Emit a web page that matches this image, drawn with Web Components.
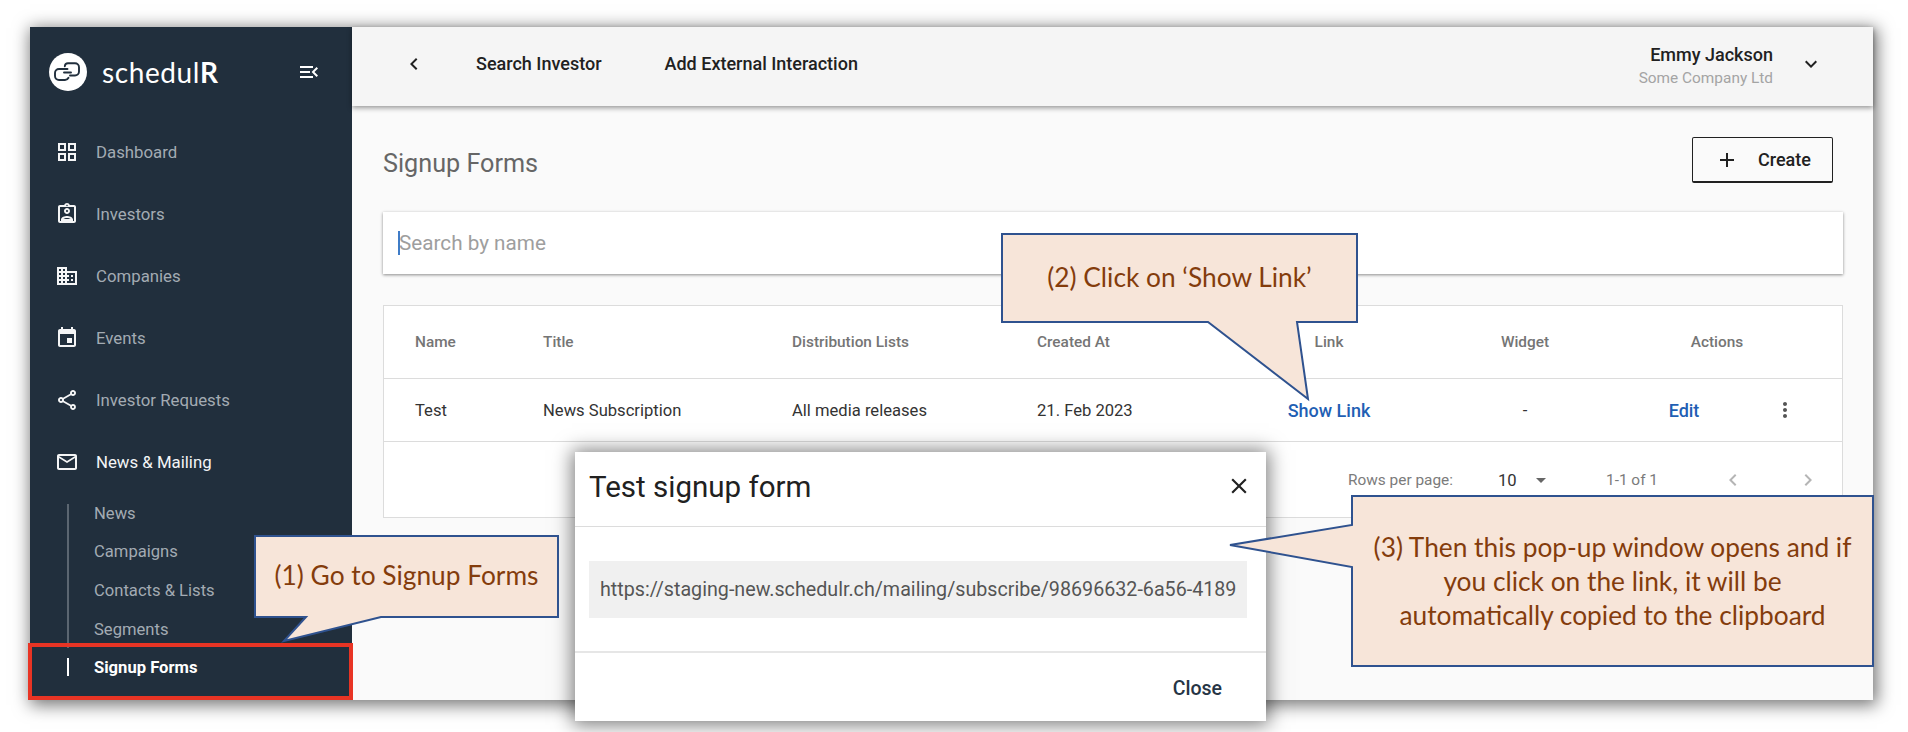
<!DOCTYPE html>
<html lang="en">
<head>
<meta charset="utf-8">
<title>Signup Forms</title>
<style>
    html, body { margin: 0; background: #fff; }
    body {
        position: relative;
        width: 1908px;
        height: 732px;
        overflow: hidden;
        padding: 27px 35px 32px 30px;
        box-sizing: border-box;
        font-family: Roboto, "Liberation Sans", sans-serif;
    }
</style>
</head>
<body>
<app-window>
    <side-nav slot="nav"></side-nav>
    <top-bar></top-bar>
    <page-content>
        <page-heading></page-heading>
        <search-box placeholder="Search by name"></search-box>
        <signup-table></signup-table>
    </page-content>
</app-window>

<signup-dialog heading="Test signup form" url="https://staging-new.schedulr.ch/mailing/subscribe/98696632-6a56-4189"></signup-dialog>

<mark-box></mark-box>

<call-out left="255" top="536" width="303" height="81" nudge="4"
    points="0,0 303,0 303,81 126,81 29,105 51,81 0,81">(1) Go to Signup Forms</call-out>
<call-out left="1002" top="234" width="355" height="88" nudge="2"
    points="0,0 355,0 355,88 295,88 306,165 206,88 0,88">(2) Click on ‘Show Link’</call-out>
<call-out left="1352" top="496" width="521" height="170" nudge="0"
    points="0,0 521,0 521,170 0,170 0,71 -122,49 0,29">(3) Then this pop-up window opens and if<br>you click on the link, it will be<br>automatically copied to the clipboard</call-out>

<script>
const ICONS = {
    dashboard: 'M3 3v8h8V3H3zm6 6H5V5h4v4zm-6 4v8h8v-8H3zm6 6H5v-4h4v4zm4-16v8h8V3h-8zm6 6h-4V5h4v4zm-6 4v8h8v-8h-8zm6 6h-4v-4h4v4z',
    investors: 'M19 3h-4.18C14.4 1.84 13.3 1 12 1s-2.4.84-2.82 2H5c-1.1 0-2 .9-2 2v14c0 1.1.9 2 2 2h14c1.1 0 2-.9 2-2V5c0-1.1-.9-2-2-2zm-7-.25c.22 0 .41.1.55.25.12.13.2.31.2.5 0 .41-.34.75-.75.75s-.75-.34-.75-.75c0-.19.08-.37.2-.5.14-.15.33-.25.55-.25zM19 19H5V5h14v14zM12 6c-1.65 0-3 1.35-3 3s1.35 3 3 3 3-1.35 3-3-1.35-3-3-3zm0 4c-.55 0-1-.45-1-1s.45-1 1-1 1 .45 1 1-.45 1-1 1zm-6 7.47V19h12v-1.53c0-2.5-3.97-3.58-6-3.58s-6 1.07-6 3.58zM8.31 17c.69-.56 2.38-1.12 3.69-1.12s3.01.56 3.69 1.12H8.31z',
    companies: 'M12 7V3H2v18h20V7H12zM6 19H4v-2h2v2zm0-4H4v-2h2v2zm0-4H4V9h2v2zm0-4H4V5h2v2zm4 12H8v-2h2v2zm0-4H8v-2h2v2zm0-4H8V9h2v2zm0-4H8V5h2v2zm10 12h-8v-2h2v-2h-2v-2h2v-2h-2V9h8v10zm-2-8h-2v2h2v-2zm0 4h-2v2h2v-2z',
    events: 'M17 12h-5v5h5v-5zM16 1v2H8V1H6v2H5c-1.11 0-1.99.9-1.99 2L3 19c0 1.1.89 2 2 2h14c1.1 0 2-.9 2-2V5c0-1.1-.9-2-2-2h-1V1h-2zm3 18H5V8h14v11z',
    share: 'M18 16.08c-.76 0-1.44.3-1.96.77L8.91 12.7c.05-.23.09-.46.09-.7s-.04-.47-.09-.7l7.05-4.11c.54.5 1.25.81 2.04.81 1.66 0 3-1.34 3-3s-1.34-3-3-3-3 1.34-3 3c0 .24.04.47.09.7L8.04 9.81C7.5 9.31 6.79 9 6 9c-1.66 0-3 1.34-3 3s1.34 3 3 3c.79 0 1.5-.31 2.04-.81l7.12 4.16c-.05.21-.08.43-.08.65 0 1.61 1.31 2.92 2.92 2.92 1.61 0 2.92-1.31 2.92-2.92s-1.31-2.92-2.92-2.92zM18 4c.55 0 1 .45 1 1s-.45 1-1 1-1-.45-1-1 .45-1 1-1zM6 13c-.55 0-1-.45-1-1s.45-1 1-1 1 .45 1 1-.45 1-1 1zm12 7.02c-.55 0-1-.45-1-1s.45-1 1-1 1 .45 1 1-.45 1-1 1z',
    mail: 'M22 6c0-1.1-.9-2-2-2H4c-1.1 0-2 .9-2 2v12c0 1.1.9 2 2 2h16c1.1 0 2-.9 2-2V6zm-2 0l-8 5-8-5h16zm0 12H4V8l8 5 8-5v10z',
    menuOpen: 'M3 18h13v-2H3v2zm0-5h10v-2H3v2zm0-7v2h13V6H3zm18 9.59L17.42 12 21 8.41 19.59 7l-5 5 5 5L21 15.59z',
    left: 'M15.41 7.41L14 6l-6 6 6 6 1.41-1.41L10.83 12z',
    right: 'M10 6L8.59 7.41 13.17 12l-4.58 4.59L10 18l6-6z',
    down: 'M7.41 8.59L12 13.17l4.59-4.58L18 10l-6 6-6-6z',
    plus: 'M19 13h-6v6h-2v-6H5v-2h6V5h2v6h6v2z',
    close: 'M19 6.41L17.59 5 12 10.59 6.41 5 5 6.41 10.59 12 5 17.59 6.41 19 12 13.41 17.59 19 19 17.59 13.41 12z',
    kebab: 'M12 8c1.1 0 2-.9 2-2s-.9-2-2-2-2 .9-2 2 .9 2 2 2zm0 2c-1.1 0-2 .9-2 2s.9 2 2 2 2-.9 2-2-.9-2-2-2zm0 6c-1.1 0-2 .9-2 2s.9 2 2 2 2-.9 2-2-.9-2-2-2z'
};

function icon(name, size = 24) {
    return `<svg width="${size}" height="${size}" viewBox="0 0 24 24" fill="currentColor" aria-hidden="true"><path d="${ICONS[name]}"/></svg>`;
}

class AppWindow extends HTMLElement {
    constructor() {
        super();
        this.attachShadow({ mode: 'open' });
        this.shadowRoot.innerHTML = `
            <style>
                :host {
                    display: flex;
                    width: 100%;
                    height: 100%;
                    box-shadow: 2px 3px 16px 2px rgba(0,0,0,0.55);
                }
                .main {
                    flex: 1;
                    min-width: 0;
                    display: flex;
                    flex-direction: column;
                    background: #fafafa;
                }
            </style>
            <slot name="nav"></slot>
            <div class="main"><slot></slot></div>
        `;
    }
}

class NavItem extends HTMLElement {
    constructor() {
        super();
        this.attachShadow({ mode: 'open' });
    }

    connectedCallback() {
        this.shadowRoot.innerHTML = `
            <style>
                :host {
                    display: flex;
                    align-items: center;
                    height: 62px;
                    padding-left: 25px;
                    gap: 17px;
                    font-size: 16.8px;
                    color: #a3abb3;
                }
                :host([open]) { color: #f4f5f6; }
                svg { color: #f4f5f6; flex: none; }
            </style>
            ${icon(this.getAttribute('icon'))}
            <slot></slot>
        `;
    }
}

class SubItem extends HTMLElement {
    constructor() {
        super();
        this.attachShadow({ mode: 'open' });
        this.shadowRoot.innerHTML = `
            <style>
                :host {
                    display: flex;
                    align-items: stretch;
                    height: 38.6px;
                    margin-left: 37px;
                    gap: 25px;
                    font-size: 16.6px;
                    color: #a3abb3;
                }
                :host([active]) { color: #fff; font-weight: 700; }
                :host([first]) { margin-top: 1px; }
                .track { width: 2px; flex: none; background: #5b6671; }
                :host([first]) .track { margin-top: 10px; }
                :host([active]) .track { background: #fff; margin: 10px 0 10.6px; }
                .label { align-self: center; }
            </style>
            <span class="track"></span>
            <span class="label"><slot></slot></span>
        `;
    }
}

class SideNav extends HTMLElement {
    constructor() {
        super();
        this.attachShadow({ mode: 'open' });
        this.shadowRoot.innerHTML = `
            <style>
                :host {
                    display: block;
                    flex: none;
                    width: 322px;
                    background: #212f3d;
                }
                .brand {
                    display: flex;
                    align-items: center;
                    height: 90px;
                    padding: 0 31px 4px 19px;
                    color: #fff;
                }
                .name {
                    font-family: Lato, sans-serif;
                    font-size: 28px;
                    margin-left: 15px;
                    letter-spacing: 0.6px;
                    flex: 1;
                }
                .name b { font-weight: 700; }
                .logo { flex: none; }
            </style>
            <div class="brand">
                <svg class="logo" width="38" height="38" viewBox="6 5 38 38" aria-hidden="true">
                    <circle cx="25" cy="24" r="19" fill="#fff"/>
                    <g fill="none" stroke="#212f3d" stroke-width="1.9" stroke-linecap="round">
                        <path d="M24.5 21H16a4 4 0 0 0-4 4v3a4 4 0 0 0 4 4h6a4 4 0 0 0 3.5-2.2"/>
                        <path d="M27 27.5h5a4 4 0 0 0 4-4v-4.200a4 4 0 0 0-4-4h-7a3.200 3.200 0 0 0-3.200 3"/>
                        <path d="M21 24.500h7"/>
                    </g>
                </svg>
                <span class="name">schedul<b>R</b></span>
                ${icon('menuOpen')}
            </div>
            <nav-item icon="dashboard">Dashboard</nav-item>
            <nav-item icon="investors">Investors</nav-item>
            <nav-item icon="companies">Companies</nav-item>
            <nav-item icon="events">Events</nav-item>
            <nav-item icon="share">Investor Requests</nav-item>
            <nav-item icon="mail" open>News &amp; Mailing</nav-item>
            <sub-item first>News</sub-item>
            <sub-item>Campaigns</sub-item>
            <sub-item>Contacts &amp; Lists</sub-item>
            <sub-item>Segments</sub-item>
            <sub-item active>Signup Forms</sub-item>
        `;
    }
}

class TopBar extends HTMLElement {
    constructor() {
        super();
        this.attachShadow({ mode: 'open' });
        this.shadowRoot.innerHTML = `
            <style>
                :host {
                    display: flex;
                    align-items: center;
                    flex: none;
                    box-sizing: border-box;
                    height: 79px;
                    background: #f5f5f5;
                    box-shadow: 0 2px 5px rgba(0,0,0,0.4);
                    padding: 0 50px 6px 50px;
                    position: relative;
                    color: #212121;
                    font-size: 18px;
                    font-weight: 500;
                }
                .back { display: flex; width: 24px; margin-right: 50px; }
                .link { margin-right: 63px; }
                .user { margin-left: auto; margin-top: 2px; text-align: right; }
                .user div:first-child { line-height: 26px; }
                .user div:last-child { color: #a4a4a4; font-weight: 400; font-size: 15.4px; line-height: 20px; }
                .caret { display: flex; margin-left: 26px; }
            </style>
            <span class="back">${icon('left')}</span>
            <span class="link">Search Investor</span>
            <span class="link">Add External Interaction</span>
            <div class="user">
                <div>Emmy Jackson</div>
                <div>Some Company Ltd</div>
            </div>
            <span class="caret">${icon('down')}</span>
        `;
    }
}

class PageContent extends HTMLElement {
    constructor() {
        super();
        this.attachShadow({ mode: 'open' });
        this.shadowRoot.innerHTML = `
            <style>
                :host {
                    display: block;
                    padding: 31px 30px 0 31px;
                }
            </style>
            <slot></slot>
        `;
    }
}

class PageHeading extends HTMLElement {
    constructor() {
        super();
        this.attachShadow({ mode: 'open' });
        this.shadowRoot.innerHTML = `
            <style>
                :host {
                    display: flex;
                    align-items: center;
                    justify-content: space-between;
                    height: 46px;
                    margin-bottom: 29px;
                }
                h1 { margin: 7px 0 0; font-size: 25.2px; font-weight: 400; color: #666; }
                .create {
                    display: flex;
                    align-items: center;
                    box-sizing: border-box;
                    width: 141px;
                    height: 46px;
                    margin-right: 10px;
                    padding-left: 26px;
                    gap: 23px;
                    border: 1px solid #212121;
                    border-bottom-width: 2px;
                    border-radius: 2px;
                    font-size: 18px;
                    font-weight: 500;
                    color: #212121;
                }
                svg { margin-left: -4px; margin-right: -4px; }
            </style>
            <h1>Signup Forms</h1>
            <div class="create">${icon('plus')}<span>Create</span></div>
        `;
    }
}

class SearchBox extends HTMLElement {
    connectedCallback() {
        this.attachShadow({ mode: 'open' }).innerHTML = `
            <style>
                :host {
                    display: flex;
                    align-items: center;
                    box-sizing: border-box;
                    height: 62px;
                    padding: 0 0 1px 15px;
                    background: #fff;
                    box-shadow: 0 1px 3px rgba(0,0,0,0.45);
                    margin-bottom: 31px;
                }
                .caret { width: 2px; height: 24px; background: #3f7cc8; flex: none; }
                .hint { font-size: 20.7px; color: #9e9e9e; margin-left: -1px; }
            </style>
            <span class="caret"></span>
            <span class="hint">${this.getAttribute('placeholder')}</span>
        `;
    }
}

class SignupTable extends HTMLElement {
    constructor() {
        super();
        this.attachShadow({ mode: 'open' });
    }

    connectedCallback() {
        this.render();
    }

    render() {
        const rows = [
            { name: 'Test', title: 'News Subscription', lists: 'All media releases', created: '21. Feb 2023', widget: '-' }
        ];
        this.shadowRoot.innerHTML = `
            <style>
                :host {
                    display: block;
                    box-sizing: border-box;
                    height: 213px;
                    background: #fff;
                    border: 1px solid #dcdcdc;
                    font-size: 16.6px;
                    color: #333;
                }
                .row {
                    display: grid;
                    grid-template-columns: 128px 249px 245px 194px 196px 196px 122px 80px;
                    align-items: center;
                    padding-left: 31px;
                    border-bottom: 1px solid #dcdcdc;
                }
                .head { height: 72px; font-size: 15.4px; font-weight: 500; color: #757575; }
                .body { height: 62px; }
                .c { text-align: center; }
                .actions { grid-column: span 2; padding-right: 14px; }
                a { color: #1f5fb4; font-weight: 500; font-size: 18px; }
                .kebab { display: flex; justify-content: center; color: #555; }
                .pager {
                    display: grid;
                    grid-template-columns: 150px 108px 115px 75px 24px;
                    align-items: center;
                    height: 76px;
                    padding-left: 964px;
                    font-size: 15.4px;
                    color: #7b7b7b;
                }
                .size { display: flex; align-items: center; color: #333; font-size: 16.6px; }
                .size i {
                    margin-left: 19px;
                    border-left: 5px solid transparent;
                    border-right: 5px solid transparent;
                    border-top: 5px solid #666;
                }
                .pager svg { color: #b5b5b5; display: block; }
            </style>
            <div class="row head">
                <span>Name</span><span>Title</span><span>Distribution Lists</span><span>Created At</span>
                <span class="c">Link</span><span class="c">Widget</span><span class="c actions">Actions</span>
            </div>
            ${rows.map(row => `
                <div class="row body">
                    <span>${row.name}</span><span>${row.title}</span><span>${row.lists}</span><span>${row.created}</span>
                    <span class="c"><a>Show Link</a></span><span class="c">${row.widget}</span>
                    <span class="c"><a>Edit</a></span><span class="kebab">${icon('kebab')}</span>
                </div>`).join('')}
            <div class="pager">
                <span>Rows per page:</span>
                <span class="size">10<i></i></span>
                <span>1-1 of 1</span>
                <span>${icon('left')}</span>
                <span>${icon('right')}</span>
            </div>
        `;
    }
}

class SignupDialog extends HTMLElement {
    connectedCallback() {
        this.attachShadow({ mode: 'open' }).innerHTML = `
            <style>
                :host {
                    position: absolute;
                    left: 575px;
                    top: 452px;
                    width: 691px;
                    height: 269px;
                    display: flex;
                    flex-direction: column;
                    background: #fff;
                    box-shadow: 0 1px 18px 3px rgba(0,0,0,0.5);
                    color: #212121;
                }
                header {
                    display: flex;
                    align-items: center;
                    justify-content: space-between;
                    height: 75px;
                    padding: 0 14px 5px 14px;
                    border-bottom: 1px solid #dcdcdc;
                    font-size: 29.5px;
                    box-sizing: border-box;
                }
                svg { width: 26px; height: 26px; margin-bottom: 2px; }
                .content {
                    height: 126px;
                    box-sizing: border-box;
                    padding: 34px 19px 0 14px;
                    border-bottom: 2px solid #e6e6e6;
                }
                .url {
                    display: flex;
                    align-items: center;
                    height: 57px;
                    padding-left: 11px;
                    background: #f0f0f0;
                    color: #555;
                    font-size: 19.7px;
                    white-space: nowrap;
                    overflow: hidden;
                }
                footer {
                    flex: 1;
                    display: flex;
                    align-items: center;
                    justify-content: flex-end;
                    padding: 2px 44px 0 0;
                    font-size: 19.5px;
                    font-weight: 500;
                    color: #263545;
                }
            </style>
            <header>
                <span>${this.getAttribute('heading')}</span>
                ${icon('close')}
            </header>
            <div class="content"><div class="url">${this.getAttribute('url')}</div></div>
            <footer>Close</footer>
        `;
    }
}

class MarkBox extends HTMLElement {
    constructor() {
        super();
        this.attachShadow({ mode: 'open' });
        this.shadowRoot.innerHTML = `
            <style>
                :host {
                    position: absolute;
                    left: 28px;
                    top: 643px;
                    width: 325px;
                    height: 57px;
                    box-sizing: border-box;
                    border: 4px solid #e83424;
                }
            </style>
        `;
    }
}

class CallOut extends HTMLElement {
    connectedCallback() {
        const attr = name => this.getAttribute(name);
        this.attachShadow({ mode: 'open' }).innerHTML = `
            <style>
                :host {
                    position: absolute;
                    left: ${attr('left')}px;
                    top: ${attr('top')}px;
                    width: ${attr('width')}px;
                    height: ${attr('height')}px;
                    box-sizing: border-box;
                    padding-bottom: ${attr('nudge')}px;
                    display: flex;
                    align-items: center;
                    justify-content: center;
                    text-align: center;
                    font-family: Lato, "Liberation Sans", sans-serif;
                    font-size: 26.3px;
                    line-height: 34px;
                    color: #843c0c;
                }
                svg { position: absolute; left: 0; top: 0; overflow: visible; }
                .text { position: relative; }
            </style>
            <svg width="${attr('width')}" height="${attr('height')}" aria-hidden="true">
                <polygon points="${attr('points')}" fill="#f7e5d9" stroke="#2f528f" stroke-width="2"/>
            </svg>
            <div class="text"><slot></slot></div>
        `;
    }
}

customElements.define('nav-item', NavItem);
customElements.define('sub-item', SubItem);
customElements.define('side-nav', SideNav);
customElements.define('top-bar', TopBar);
customElements.define('app-window', AppWindow);
customElements.define('page-content', PageContent);
customElements.define('page-heading', PageHeading);
customElements.define('search-box', SearchBox);
customElements.define('signup-table', SignupTable);
customElements.define('signup-dialog', SignupDialog);
customElements.define('mark-box', MarkBox);
customElements.define('call-out', CallOut);
</script>
</body>
</html>
